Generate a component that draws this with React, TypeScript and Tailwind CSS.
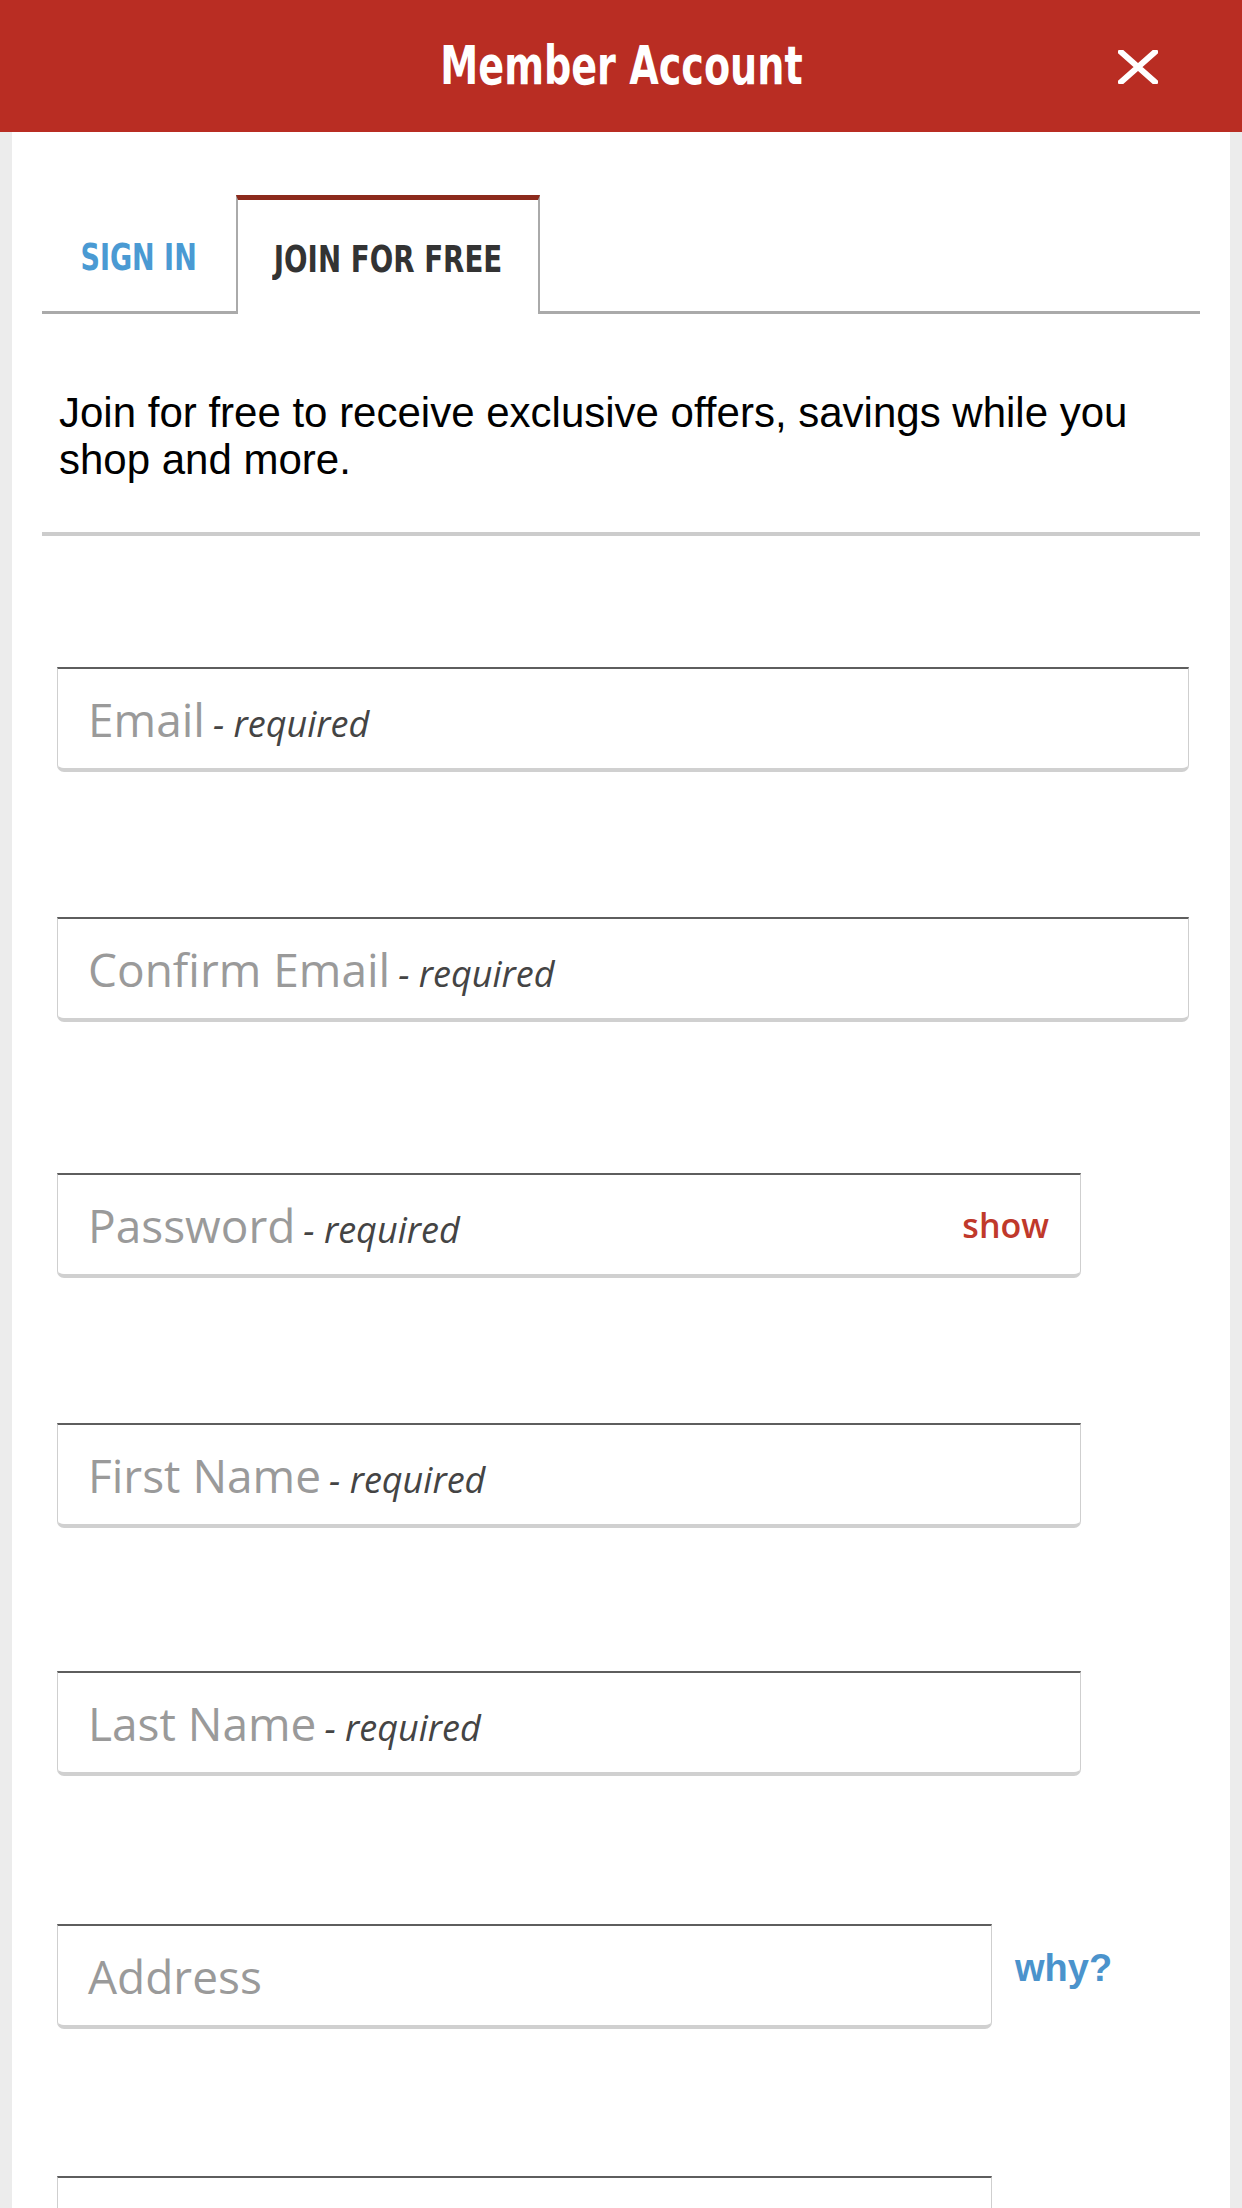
import React, { useState } from "react";

const condensed = {
  fontFamily: '"Liberation Sans Narrow", "DejaVu Sans Condensed", "Liberation Sans", sans-serif',
};

type Field = {
  label: string;
  required?: boolean;
  width: string;
  top: string;
  show?: boolean;
  why?: boolean;
};

const fields: Field[] = [
  { label: "Email", required: true, width: "w-[1132px]", top: "mt-[131px]" },
  { label: "Confirm Email", required: true, width: "w-[1132px]", top: "mt-[145px]" },
  { label: "Password", required: true, width: "w-[1024px]", top: "mt-[151px]", show: true },
  { label: "First Name", required: true, width: "w-[1024px]", top: "mt-[145px]" },
  { label: "Last Name", required: true, width: "w-[1024px]", top: "mt-[143px]" },
  { label: "Address", width: "w-[935px]", top: "mt-[148px]", why: true },
  { label: "", width: "w-[935px]", top: "mt-[147px]" },
];

const CloseIcon = () => (
  <svg viewBox="0 0 40 34" className="w-[40px] h-[34px]" fill="none">
    <path d="M3 2 L37 32 M37 2 L3 32" stroke="#ffffff" strokeWidth="6" strokeLinecap="square" />
  </svg>
);

const InputRow: React.FC<{ field: Field }> = ({ field }) => {
  const [visible, setVisible] = useState(false);
  return (
    <div className={`flex items-start ${field.top}`}>
      <div
        className={`${field.width} h-[105px] flex items-center justify-between bg-white border-t-2 border-t-[#5e5e5e] border-x border-x-[#cfcfcf] border-b-4 border-b-[#d0d0d0] rounded-b-[7px] pl-[30px] pr-[31px]`}
        style={{ fontFamily: '"Open Sans", sans-serif' }}
      >
        <span className="flex items-baseline whitespace-nowrap">
          <span className="text-[46px] text-[#9a9a9a] font-normal leading-none">{field.label}</span>
          {field.required && (
            <span className="text-[36px] italic text-[#444] ml-[8px] leading-none">- required</span>
          )}
        </span>
        {field.show && (
          <button
            onClick={() => setVisible(!visible)}
            className="text-[34px] font-semibold text-[#c0392b] leading-none"
          >
            show
          </button>
        )}
      </div>
      {field.why && (
        <span
          className="ml-[23px] mt-[25px] text-[38px] font-bold text-[#4b93cc] leading-none"
          style={{ fontFamily: '"Liberation Sans", Arial, sans-serif' }}
        >
          why?
        </span>
      )}
    </div>
  );
};

export default function App() {
  const [tab, setTab] = useState<"signin" | "join">("join");

  return (
    <div className="w-[1242px] h-[2208px] overflow-hidden bg-[#ececec] flex flex-col">
      <header className="h-[132px] shrink-0 bg-[#b92d23] flex items-center justify-center relative">
        <h1
          className="inline-block scale-x-[0.8] text-white font-bold text-[53px] leading-none -mt-[2px] whitespace-nowrap"
          style={condensed}
        >
          Member Account
        </h1>
        <button className="absolute right-[84px] top-[50px]">
          <CloseIcon />
        </button>
      </header>

      <main className="mx-[12px] flex-1 bg-white pt-[63px] px-[30px]">
        <div className="flex items-end h-[119px]" style={condensed}>
          <button
            onClick={() => setTab("signin")}
            className="w-[194px] h-[116px] flex items-center justify-center border-b-[3px] border-[#aaaaaa]"
          >
            <span className="inline-block scale-x-[0.79] text-[38px] font-bold text-[#4a9ad3] whitespace-nowrap mt-[6px]">
              SIGN IN
            </span>
          </button>
          <button
            onClick={() => setTab("join")}
            className="w-[304px] h-[119px] flex items-center justify-center border-t-[5px] border-t-[#8c2a1c] border-x-2 border-x-[#aaaaaa]"
          >
            <span className="inline-block scale-x-[0.81] text-[38px] font-bold text-[#333] whitespace-nowrap mt-[4px]">
              JOIN FOR FREE
            </span>
          </button>
          <div className="flex-1 border-b-[3px] border-[#aaaaaa]" />
        </div>

        <p
          className="mt-[75px] pl-[17px] pr-[40px] text-[42px] leading-[47px] text-black"
          style={{ fontFamily: '"Liberation Sans", Arial, sans-serif' }}
        >
          Join for free to receive exclusive offers, savings while you shop and more.
        </p>

        <div className="mt-[49px] h-[4px] bg-[#cccccc]" />

        <form className="pl-[15px] flex flex-col">
          {fields.map((f, i) => (
            <InputRow key={i} field={f} />
          ))}
        </form>
      </main>
    </div>
  );
}
